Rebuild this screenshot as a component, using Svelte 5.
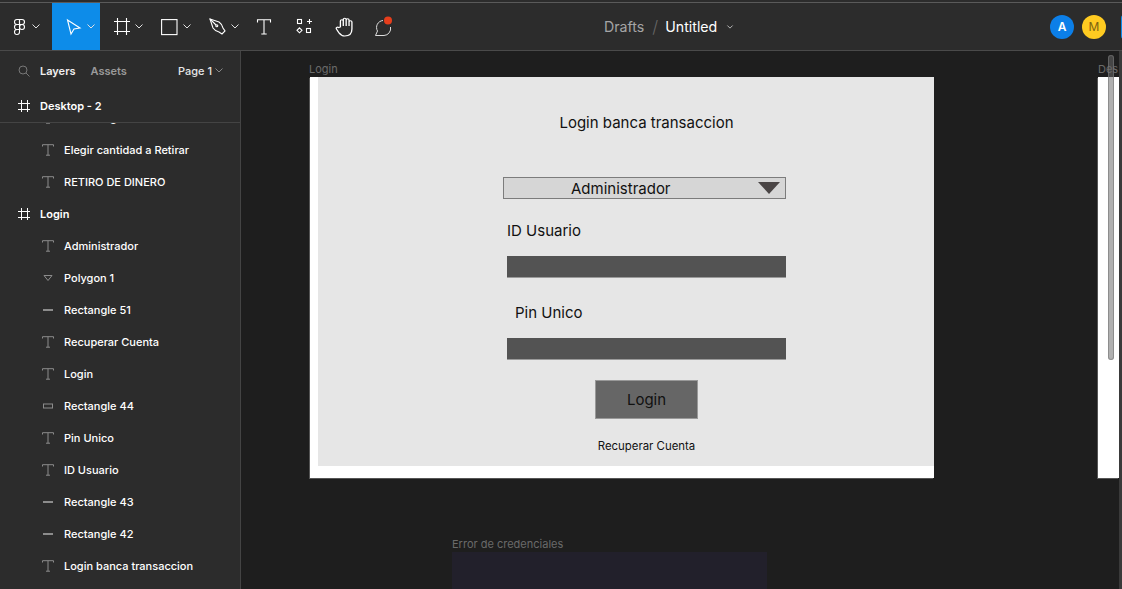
<script>
  const layers = [
    { name: 'Menu Pago', kind: 'text' },
    { name: 'Elegir cantidad a Retirar', kind: 'text' },
    { name: 'RETIRO DE DINERO', kind: 'text' },
    { name: 'Login', kind: 'frame' },
    { name: 'Administrador', kind: 'text' },
    { name: 'Polygon 1', kind: 'polygon' },
    { name: 'Rectangle 51', kind: 'line' },
    { name: 'Recuperar Cuenta', kind: 'text' },
    { name: 'Login', kind: 'text' },
    { name: 'Rectangle 44', kind: 'rect' },
    { name: 'Pin Unico', kind: 'text' },
    { name: 'ID Usuario', kind: 'text' },
    { name: 'Rectangle 43', kind: 'line' },
    { name: 'Rectangle 42', kind: 'line' },
    { name: 'Login banca transaccion', kind: 'text' }
  ];
</script>

{#snippet chev()}
  <svg class="chev" width="8" height="5" viewBox="0 0 8 5"><path d="M.5.5 4 4 7.5.5" /></svg>
{/snippet}

{#snippet hash()}
  <svg class="hash" width="12" height="12" viewBox="0 0 12 12"><path d="M3.5 0v12M9.500 0v12M0 3.500h12M0 9.500h12" /></svg>
{/snippet}

<div class="app">
  <header class="toolbar">
    <div class="tools">
      <div class="tool first">
        <svg class="ico" width="16" height="16" viewBox="0 0 16 16">
          <g transform="translate(2.5 0)">
            <path d="M6 .5H3.5a2.5 2.5 0 0 0 0 5H6z" />
            <path d="M6 .5h2.5a2.5 2.5 0 0 1 0 5H6z" />
            <path d="M6 5.5H3.5a2.5 2.5 0 0 0 0 5H6z" />
            <circle cx="8.5" cy="8" r="2.5" />
            <path d="M3.5 10.5H6V13a2.5 2.5 0 1 1-2.5-2.5z" />
          </g>
        </svg>
        {@render chev()}
      </div>
      <div class="tool active">
        <svg class="ico" width="16" height="16" viewBox="0 0 16 16"><path d="M1.5 1 14 9l-6 1-3 5z" /></svg>
        {@render chev()}
      </div>
      <div class="tool">
        <svg class="ico" width="16" height="17" viewBox="0 0 16 17"><path d="M3.5 0v17M12.5 0v17M0 3.5h16M0 13.5h16" /></svg>
        {@render chev()}
      </div>
      <div class="tool">
        <svg class="ico" width="16" height="16" viewBox="0 0 16 16"><rect x="-.4" y=".6" width="15.4" height="15" /></svg>
        {@render chev()}
      </div>
      <div class="tool">
        <svg class="ico" width="16" height="16" viewBox="0 0 16 16">
          <path d="M0 0l9 3q3 2 4 6l2 3-3 3-3-2q-4-1-6-4z" />
          <path d="M0 0l6 6" />
          <circle cx="6.8" cy="6.8" r="1" />
        </svg>
        {@render chev()}
      </div>
      <div class="tool plain">
        <svg class="ico" width="14" height="16" viewBox="0 0 14 16"><path d="M.5 3.5V.7h13v2.8M7 .7V15M4.3 15h5.4" /></svg>
      </div>
      <div class="tool plain">
        <svg class="ico" width="16" height="16" viewBox="0 0 16 16">
          <rect x="1.5" y=".5" width="4" height="4" />
          <path d="M13.5 0v5M11 2.5h5" />
          <path d="M3.5 8.8 6 11.3l-2.5 2.5L1 11.300z" />
          <rect x="10.500" y="9.500" width="4" height="4" />
        </svg>
      </div>
      <div class="tool plain">
        <svg class="ico" width="18" height="20" viewBox="0 0 18 20">
          <g transform="scale(1.2 1)">
            <path d="M4.500 10V4a1.200 1.200 0 0 1 2.400 0v5-6.500a1.200 1.200 0 0 1 2.400 0V9V3a1.200 1.200 0 0 1 2.400 0v6-4a1.200 1.200 0 0 1 2.400 0v7c0 4-2 7-6 7-3 0-4-2-5-3.500L1.200 12c-.8-1.200.8-2.400 1.800-1.400z" />
          </g>
        </svg>
      </div>
      <div class="tool plain">
        <svg class="ico thin" width="20" height="20" viewBox="0 0 20 20">
          <path d="M9 3.500A7 7 0 0 0 3.500 14l-2 4.500H10a7 7 0 0 0 6.500-8.500" />
          <circle class="dot" cx="14" cy="3.500" r="4" />
        </svg>
      </div>
    </div>

    <div class="crumbs">
      <span class="drafts">Drafts</span>
      <span class="slash">/</span>
      <span class="file">Untitled</span>
      {@render chev()}
    </div>

    <div class="people">
      <span class="avatar blue">A</span>
      <span class="avatar yellow">M</span>
      <span class="share"></span>
    </div>
  </header>

  <div class="workspace">
    <aside class="panel">
      <div class="tabs">
        <svg class="search" width="12" height="12" viewBox="0 0 12 12"><circle cx="5" cy="5" r="4" /><path d="M8 8l3.500 3.500" /></svg>
        <span class="tab on">Layers</span>
        <span class="tab">Assets</span>
        <span class="page">Page 1 {@render chev()}</span>
      </div>
      <div class="current">
        {@render hash()}
        <span>Desktop - 2</span>
      </div>
      <ul class="layers">
        {#each layers as layer}
          <li class:top={layer.kind === 'frame'}>
            {#if layer.kind === 'frame'}
              {@render hash()}
            {:else if layer.kind === 'text'}
              <svg class="kind" width="12" height="12" viewBox="0 0 12 12"><path d="M.5 2.500V.7h11v1.800M6 .7v10.500M4 11.200h4" /></svg>
            {:else if layer.kind === 'polygon'}
              <svg class="kind" width="12" height="12" viewBox="0 0 12 12"><path d="M2 3.500h8l-4 5z" /></svg>
            {:else if layer.kind === 'line'}
              <svg class="kind" width="12" height="12" viewBox="0 0 12 12"><path class="thick" d="M1 6h10" /></svg>
            {:else}
              <svg class="kind" width="12" height="12" viewBox="0 0 12 12"><rect x="1.500" y="4" width="9" height="4" /></svg>
            {/if}
            <span>{layer.name}</span>
          </li>
        {/each}
      </ul>
    </aside>

    <main class="canvas">
      <span class="label login-label">Login</span>
      <section class="frame">
        <div class="screen">
          <div class="form">
            <h1>Login banca transaccion</h1>
            <div class="select">
              <span>Administrador</span>
              <svg width="22" height="12" viewBox="0 0 22 12"><path d="M0 0h22L11 12z" /></svg>
            </div>
            <div class="field-label">ID Usuario</div>
            <div class="field"></div>
            <div class="field-label pin">Pin Unico</div>
            <div class="field"></div>
            <div class="button">Login</div>
            <div class="recover">Recuperar Cuenta</div>
          </div>
        </div>
      </section>

      <span class="label error-label">Error de credenciales</span>
      <div class="error-frame"></div>

      <span class="label next-label">Des</span>
      <div class="next-frame"></div>
      <div class="scroll"></div>
      <div class="right-edge"></div>
    </main>
  </div>
</div>

<style>
  :global(body) {
    margin: 0;
    background: #1e1e1e;
    overflow: hidden;
  }

  .app {
    width: 1122px;
    height: 589px;
    display: flex;
    flex-direction: column;
    overflow: hidden;
    font-family: Inter, "Liberation Sans", sans-serif;
  }

  svg {
    fill: none;
    flex: none;
    display: block;
    overflow: visible;
  }

  .toolbar {
    flex: none;
    display: flex;
    align-items: stretch;
    background: #2c2c2c;
    border-top: 1px solid #5a5a5a;
    box-shadow: 0 -2px 0 #2c2c2c;
    margin-top: 2px;
    border-bottom: 1px solid #4a4a4a;
    height: 47px;
  }

  .tools {
    display: flex;
    width: 404px;
    flex: none;
  }

  .tool {
    width: 48px;
    padding-left: 14px;
    box-sizing: border-box;
    display: flex;
    align-items: center;
    gap: 5px;
  }

  .tool.first {
    width: 52px;
    padding-left: 11px;
  }

  .tool.active {
    background: #0d8ce9;
  }

  .tool.plain {
    width: 40px;
    padding-left: 0;
    justify-content: center;
  }

  .ico {
    stroke: #fff;
    stroke-width: 1.1;
  }

  .ico.thin {
    stroke: #ddd;
    stroke-width: 1;
  }

  .dot {
    fill: #e63e1c;
    stroke: none;
  }

  .chev {
    stroke: #e0e0e0;
    stroke-width: 1;
  }

  .crumbs {
    margin-left: 200px;
    display: flex;
    align-items: center;
    font-size: 14.2px;
  }

  .drafts {
    color: #a5a5a5;
  }

  .slash {
    color: #666;
    margin: 0 7px 0 8px;
    font-size: 17px;
    font-weight: 300;
  }

  .file {
    color: #fff;
    margin-right: 10px;
  }

  .crumbs .chev {
    width: 6px;
    height: 4px;
  }

  .people {
    margin-left: auto;
    display: flex;
    align-items: center;
    gap: 8px;
  }

  .avatar {
    width: 24px;
    height: 24px;
    border-radius: 50%;
    display: flex;
    align-items: center;
    justify-content: center;
    font-size: 12px;
  }

  .blue {
    background: #0c7fe8;
    color: #fff;
    font-weight: 600;
  }

  .yellow {
    background: #ffcb21;
    color: #7d6412;
  }

  .share {
    width: 8px;
    height: 24px;
    margin-left: 7px;
    margin-right: -7px;
    background: #0d8ce9;
    border-radius: 3px 0 0 3px;
  }

  .workspace {
    flex: 1;
    min-height: 0;
    display: flex;
  }

  .panel {
    width: 241px;
    box-sizing: border-box;
    flex: none;
    background: #2c2c2c;
    border-right: 1px solid #444;
    display: flex;
    flex-direction: column;
    overflow: hidden;
    font-size: 11px;
    color: #fff;
  }

  .tabs {
    height: 39px;
    flex: none;
    display: flex;
    align-items: center;
    padding: 0 17px 0 18px;
    font-weight: 600;
    box-sizing: border-box;
  }

  .search {
    stroke: #777;
    stroke-width: 1;
    margin-right: 10px;
  }

  .tab {
    color: #9a9a9a;
    margin-right: 15px;
  }

  .tab.on {
    color: #f0f0f0;
  }

  .page {
    margin-left: auto;
    display: flex;
    align-items: center;
    gap: 3px;
    color: #e6e6e6;
    font-weight: 500;
  }

  .page .chev {
    stroke: #888;
  }

  .current {
    height: 32px;
    flex: none;
    display: flex;
    align-items: center;
    gap: 10px;
    padding-left: 18px;
    font-weight: 600;
    border-bottom: 1px solid #444;
    position: relative;
    z-index: 1;
    background: #2c2c2c;
  }

  .hash {
    stroke: #fff;
    stroke-width: 1;
  }

  .layers {
    list-style: none;
    margin: -21px 0 0;
    padding: 0;
  }

  .layers li {
    height: 32px;
    display: flex;
    align-items: center;
    gap: 10px;
    padding-left: 42px;
    font-weight: 500;
  }

  .layers li.top {
    padding-left: 18px;
    font-weight: 600;
  }

  .kind {
    stroke: #8c8c8c;
    stroke-width: 1;
  }

  .thick {
    stroke-width: 2;
  }

  .canvas {
    flex: 1;
    position: relative;
    background: #1e1e1e;
    overflow: hidden;
  }

  .label {
    position: absolute;
    font-size: 11px;
    line-height: 14px;
    color: #6a6a6a;
    white-space: nowrap;
  }

  .login-label {
    left: 68px;
    top: 11px;
  }

  .error-label {
    left: 211px;
    top: 486px;
  }

  .next-label {
    left: 857px;
    top: 11px;
  }

  .frame {
    position: absolute;
    left: 69px;
    top: 26px;
    width: 624px;
    height: 401px;
    box-sizing: border-box;
    background: #fff;
    padding: 0 0 12px 8px;
    box-shadow: -1px 1px 0 #555;
  }

  .screen {
    height: 100%;
    background: #e6e6e6;
    padding: 36px 0 0 189px;
    box-sizing: border-box;
  }

  .form {
    width: 279px;
    display: flex;
    flex-direction: column;
    color: #111;
  }

  h1 {
    margin: 0;
    font-size: 15px;
    font-weight: 400;
    line-height: 20px;
    text-align: center;
  }

  .select {
    margin: 44px 0 0 -4px;
    width: 283px;
    height: 22px;
    box-sizing: border-box;
    background: #d6d6d6;
    border: 1px solid #7c7c7c;
    display: flex;
    align-items: center;
    justify-content: space-between;
    padding: 0 5px 0 67px;
    font-size: 15px;
  }

  .select path {
    fill: #4a4545;
  }

  .field-label {
    margin-top: 22px;
    font-size: 15px;
    line-height: 20px;
  }

  .field-label.pin {
    margin: 25px 0 0 8px;
  }

  .field {
    margin-top: 15px;
    height: 22px;
    background: #535353;
    border-bottom: 1px solid #9a9a9a;
    box-sizing: border-box;
  }

  .button {
    align-self: center;
    margin-top: 20px;
    width: 103px;
    height: 39px;
    box-sizing: border-box;
    background: #666;
    border: 1px solid #999;
    display: flex;
    align-items: center;
    justify-content: center;
    font-size: 15px;
  }

  .recover {
    margin-top: 20px;
    text-align: center;
    font-size: 11.4px;
    line-height: 14px;
  }

  .error-frame {
    position: absolute;
    left: 211px;
    top: 501px;
    width: 315px;
    height: 60px;
    background: #22202b;
  }

  .next-frame {
    position: absolute;
    left: 857px;
    top: 26px;
    width: 21px;
    height: 401px;
    background: #fff;
    box-shadow: -1px 1px 0 #555;
  }

  .scroll {
    position: absolute;
    left: 867px;
    top: 4px;
    width: 6px;
    height: 305px;
    background: rgba(106, 106, 106, 0.53);
    box-shadow: inset 0 0 0 1px rgba(119, 119, 119, 0.6);
    border-radius: 3px;
  }

  .right-edge {
    position: absolute;
    right: 0;
    top: 0;
    bottom: 0;
    width: 3px;
    background: #3a3a3a;
  }
</style>
